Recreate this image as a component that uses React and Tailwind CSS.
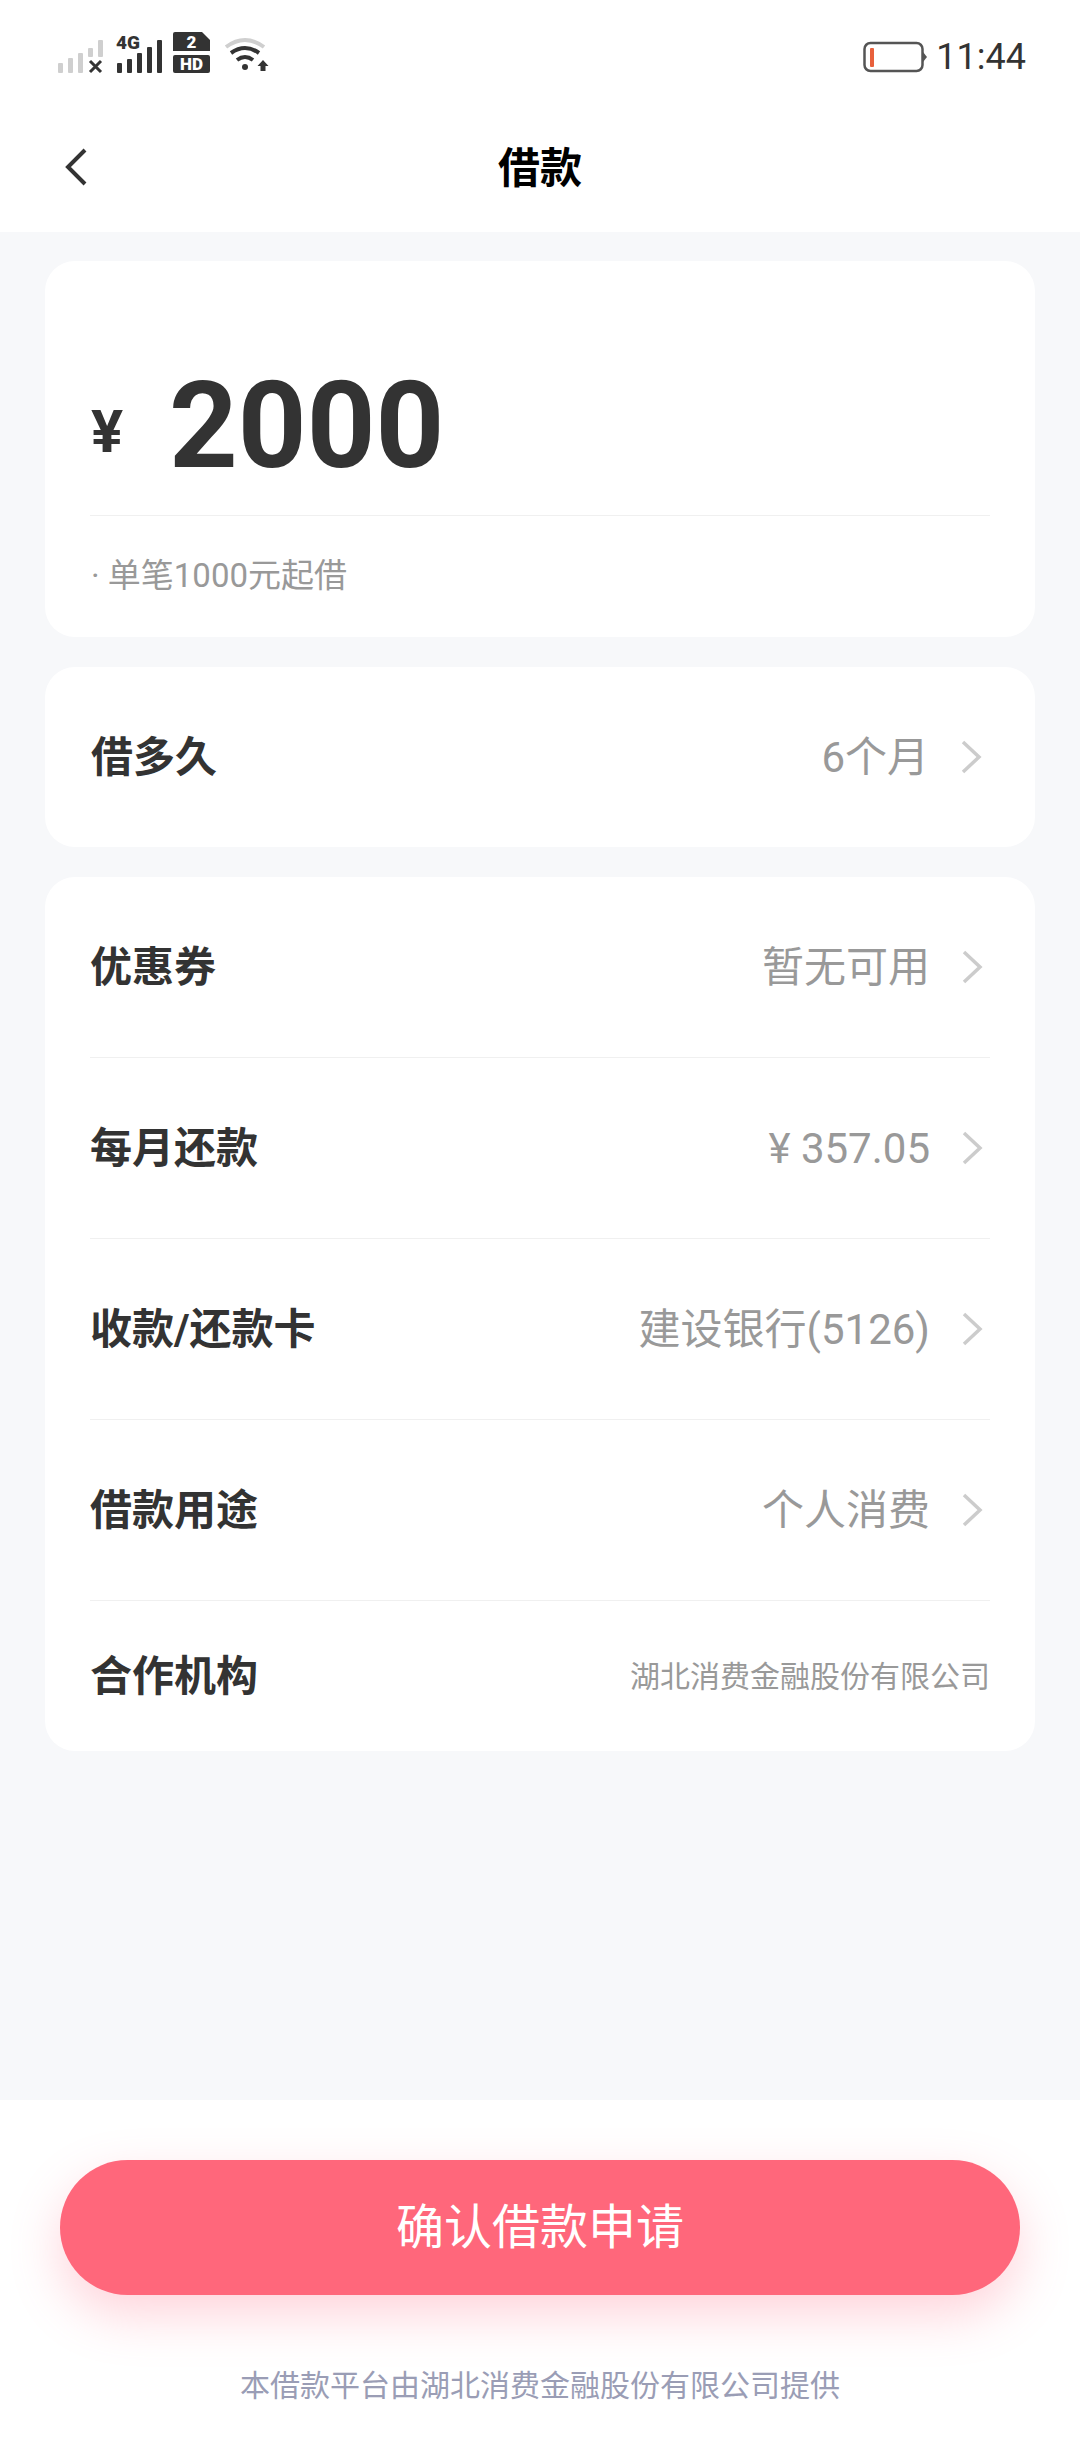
import React from 'react';

const font = { fontFamily: 'Roboto, "Noto Sans CJK SC", sans-serif' };

function StatusIcons() {
  return (
    <svg width="230" height="50" viewBox="0 0 230 50" className="block overflow-visible">
      {/* sim 1, no signal */}
      <g fill="#cfcfcf">
        <rect x="0" y="30" width="5" height="10" rx="1" />
        <rect x="10" y="25" width="5" height="15" rx="1" />
        <rect x="20" y="20" width="5" height="20" rx="1" />
        <rect x="30" y="15" width="5" height="9" rx="1" />
        <rect x="40" y="7" width="5" height="17" rx="1" />
      </g>
      <path d="M32 28l11 11M43 28L32 39" stroke="#333" strokeWidth="3" fill="none" />
      {/* sim 2 */}
      <text x="58" y="16" fontFamily="Roboto, sans-serif" fontWeight="900" fontSize="19" fill="#333">4G</text>
      <g fill="#333">
        <rect x="59" y="30" width="5" height="10" rx="1" />
        <rect x="69" y="26" width="5" height="14" rx="1" />
        <rect x="79" y="20" width="5" height="20" rx="1" />
        <rect x="89" y="14" width="5" height="26" rx="1" />
        <rect x="99" y="7" width="5" height="33" rx="1" />
      </g>
      {/* sim card */}
      <path d="M117 -1h27l8 8v11h-37v-17a2 2 0 0 1 2-2z" fill="#333" />
      <rect x="115" y="22" width="37" height="18" rx="2" fill="#333" />
      <text x="133.5" y="15" textAnchor="middle" fontFamily="Roboto, sans-serif" fontWeight="900" fontSize="17" fill="#fff">2</text>
      <text x="133.5" y="37" textAnchor="middle" fontFamily="Roboto, sans-serif" fontWeight="900" fontSize="17" fill="#fff">HD</text>
      {/* wifi */}
      <path d="M168 14q19-14 38 0" stroke="#cfcfcf" strokeWidth="4" fill="none" />
      <path d="M173 20q14-10 28 0" stroke="#333" strokeWidth="4" fill="none" />
      <path d="M179 27q8-6 16 0" stroke="#333" strokeWidth="4" fill="none" />
      <circle cx="187" cy="34" r="3" fill="#333" />
      <path d="M205 27l5.5 6h-3v5h-5v-5h-3z" fill="#333" />
    </svg>
  );
}

function Battery() {
  return (
    <svg width="64" height="32" viewBox="0 0 64 32" className="block">
      <rect x="1.5" y="2" width="58" height="28" rx="6" fill="none" stroke="#555" strokeWidth="2.5" />
      <path d="M60 11l4 5-4 5z" fill="#555" />
      <rect x="7" y="7" width="4" height="19" rx="1" fill="#e8603c" />
    </svg>
  );
}

function Chevron() {
  return (
    <svg width="22" height="34" viewBox="0 0 22 34" className="block ml-[31px] shrink-0">
      <path d="M3 2l16 15L3 32" fill="none" stroke="#cccccc" strokeWidth="3.5" />
    </svg>
  );
}

function Row({ label, value, h = 'h-[181px]', last }) {
  return (
    <div className={'flex items-center justify-between ' + h + (last ? '' : ' border-b border-[#f0f0f0]')}>
      <span className="text-[42px] font-bold text-[#333333]">{label}</span>
      <div className="flex items-center mr-[7px]">
        <span className="text-[42px] text-[#999999]">{value}</span>
        <Chevron />
      </div>
    </div>
  );
}

export default function App() {
  return (
    <div className="w-[1080px] h-[2460px] flex flex-col bg-[#f7f8fa] overflow-hidden" style={font}>
      <div className="bg-white h-[232px] shrink-0">
        <div className="h-[108px] pl-[58px] pr-[54px] pt-[33px] flex justify-between items-start">
          <StatusIcons />
          <div className="flex items-center gap-[9px] -mt-[1px]">
            <Battery />
            <span className="text-[36px] leading-[50px] text-[#333333]">11:44</span>
          </div>
        </div>
        <div className="relative h-[124px] flex items-center justify-center">
          <svg width="24" height="38" viewBox="0 0 24 38" className="absolute left-[64px] top-[40px]">
            <path d="M21 2L4 19l17 17" fill="none" stroke="#333333" strokeWidth="4" />
          </svg>
          <span className="text-[42px] font-bold text-black -mt-[4px]">借款</span>
        </div>
      </div>

      <main className="flex-1 px-[45px] pt-[29px] flex flex-col gap-[30px]">
        <section className="bg-white rounded-[30px] h-[376px] px-[45px]">
          <div className="h-[255px] flex items-end border-b border-[#f0f0f0] pb-[24px] pl-px">
            <span className="text-[60px] font-bold text-[#333333] leading-[100px] w-[78px] mb-[9px]">¥</span>
            <span className="text-[120px] font-bold text-[#333333] leading-[130px]">2000</span>
          </div>
          <p className="text-[33px] text-[#999999] mt-[35px] pl-px">· 单笔1000元起借</p>
        </section>

        <section className="bg-white rounded-[30px] px-[46px]">
          <Row label="借多久" value="6个月" h="h-[180px]" last />
        </section>

        <section className="bg-white rounded-[30px] px-[45px]">
          <Row label="优惠券" value="暂无可用" />
          <Row label="每月还款" value="¥ 357.05" />
          <Row label="收款/还款卡" value="建设银行(5126)" />
          <Row label="借款用途" value="个人消费" />
          <div className="h-[150px] flex items-center justify-between">
            <span className="text-[42px] font-bold text-[#333333]">合作机构</span>
            <span className="text-[30px] text-[#999999]">湖北消费金融股份有限公司</span>
          </div>
        </section>
      </main>

      <footer className="bg-white h-[360px] shrink-0 px-[60px] pt-[60px]">
        <button className="w-full h-[135px] rounded-full bg-[#ff677b] text-white text-[48px] shadow-[0_20px_50px_rgba(255,102,124,0.28)]">
          确认借款申请
        </button>
        <p className="mt-[68px] text-center text-[30px] text-[#9a9db5]">本借款平台由湖北消费金融股份有限公司提供</p>
      </footer>
    </div>
  );
}
